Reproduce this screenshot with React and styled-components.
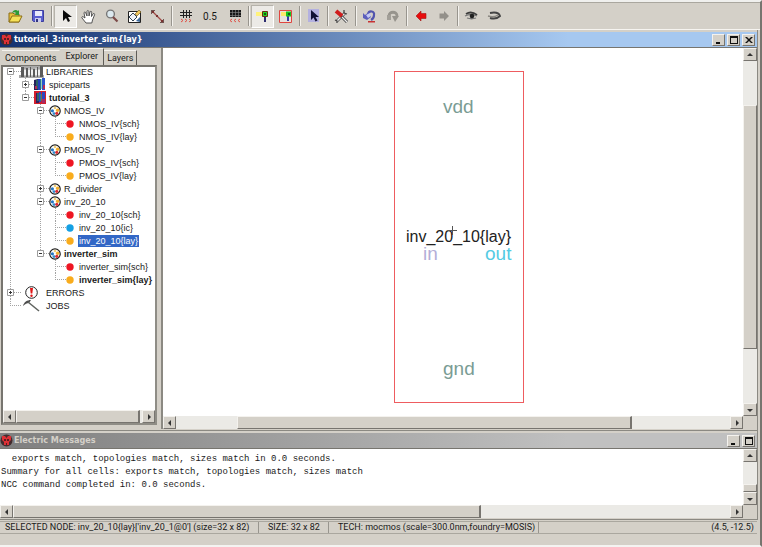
import React from "react";
import styled, {createGlobalStyle, css} from "styled-components";

const GlobalStyle = createGlobalStyle`
  * {
    box-sizing: border-box;
  }
  body {
    margin: 0;
    background: #d4d0c8;
    color: #1a1a1a;
    font-family: Roboto, "Liberation Sans", sans-serif;
    font-size: 9px;
  }
  button {
    font: inherit;
    color: inherit;
    padding: 0;
    margin: 0;
    border: 0;
    background: none;
  }
  svg {
    display: block;
    flex: none;
  }
`;

const raised = css`
  background: #d4d0c8;
  border: 1px solid;
  border-color: #f4f2ee #77746f #77746f #f4f2ee;
`;

const Frame = styled.div`
  min-height: 100vh;
  display: flex;
  flex-direction: column;
  border-top: 2px solid #f0f0ee;
  border-bottom: 2px solid #f4f3f1;
  border-right: 2px solid #77756f;
`;

/* toolbar */
const ToolBar = styled.div`
  display: flex;
  align-items: center;
  height: 28px;
  padding-left: 3px;
  border-top: 1px solid #aaa79f;
  border-bottom: 1px solid #f6f4f0;
`;

const ToolButton = styled.button`
  display: flex;
  align-items: center;
  justify-content: center;
  width: ${props => props.$wide ? "26px" : "23px"};
  height: 23px;
  font-size: 10px;
  ${props => props.$pressed && css`
    background: #eceae6;
    border: 1px solid;
    border-color: #b5b2aa #fff #fff #b5b2aa;
  `}
`;

const Separator = styled.div`
  width: 5px;
  height: 20px;
  border-left: 2px solid #d4d0c8;
  background: linear-gradient(90deg, #98958e 1px, #f4f2ee 1px, #f4f2ee 2px, #d4d0c8 2px);
`;

/* inner windows */
const Window = styled.section`
  display: flex;
  flex-direction: column;
  flex: ${props => props.$grow ? "1 0 auto" : "none"};
  margin-right: 2px;
  border-right: 1px solid #8b8982;
  border-bottom: 1px solid #8b8982;
  padding: 2px 0 1px;
`;

const TitleBar = styled.header`
  display: flex;
  align-items: center;
  height: 15px;
  padding-right: 2px;
  color: ${props => props.$active ? "#fff" : "#d4d0c8"};
  background: ${props => props.$active
    ? "linear-gradient(90deg, #12306f, #a6c8f0 75%)"
    : "linear-gradient(90deg, #7f7f7f, #c0c0c0 75%)"};
`;

const Title = styled.h1`
  flex: 1;
  margin: 0 0 0 1px;
  font-family: "DejaVu Sans Condensed", "DejaVu Sans", sans-serif;
  font-size: 9px;
  line-height: 15px;
  font-weight: bold;
`;

const WindowButtons = styled.div`
  display: flex;
  gap: 2px;
`;

const WindowButton = styled.button`
  ${raised}
  display: flex;
  align-items: center;
  justify-content: center;
  width: 13px;
  height: 12px;
`;

/* scroll bars */
const Scroll = styled.div`
  display: flex;
  flex: ${props => props.$fill ? "1" : "none"};
  flex-direction: ${props => props.$vertical ? "column" : "row"};
  ${props => props.$vertical ? "width: 14px;" : "height: 13px;"}
  background: #ebeae6;
`;

const ScrollButton = styled.button`
  ${raised}
  display: flex;
  align-items: center;
  justify-content: center;
  flex: none;
  width: ${props => props.$vertical ? "auto" : "13px"};
  height: 13px;
`;

const ScrollSpace = styled.div`
  flex: ${props => props.$size};
`;

const Thumb = styled.div`
  ${raised}
  border-right-width: ${props => props.$vertical ? "1px" : "2px"};
  flex: ${props => props.$size};
`;

const ScrollRow = styled.div`
  display: flex;
  background: #d4d0c8;
`;

const Corner = styled.div`
  width: 14px;
`;

/* explorer */
const Workspace = styled.div`
  display: flex;
  flex: 1;
  border-top: 1px solid #77756f;
`;

const SidePanel = styled.aside`
  display: flex;
  flex-direction: column;
  width: 163px;
  flex: none;
  padding-right: 4px;
  border-right: 2px solid #8b8982;
`;

const Tabs = styled.div`
  display: flex;
  align-items: flex-end;
  height: 17px;
  padding-left: 2px;
`;

const Tab = styled.button`
  height: ${props => props.$selected ? "17px" : "15px"};
  padding: ${props => props.$selected ? "0 5px 3px" : "0 3px"};
  border-top: 1px solid #f4f2ee;
  border-right: 1px solid ${props => props.$first ? "#d4d0c8" : "#5f5d58"};
`;

const TreeBox = styled.div`
  display: flex;
  flex-direction: column;
  flex: 1;
  margin: 0 0 4px 1px;
  border: 2px solid;
  border-color: #77756f #8f8d86 #8f8d86 #77756f;
  background: #fff;
`;

const TreeList = styled.ul`
  list-style: none;
  margin: ${props => props.$root ? "-2px 0 0 3px" : "0 0 0 15px"};
  padding: 0;
  font-family: "Liberation Sans", Arial, sans-serif;
  ${props => props.$root && "flex: 1;"}
`;

const TreeItem = styled.li`
  background: repeating-linear-gradient(#a3a3a3 0 1px, #fff 1px 2px) no-repeat 4px 0;
  background-size: 1px 100%;
  &:last-child {
    background-size: 1px 7px;
  }
  ul > &:first-child {
    background-position: 4px ${props => props.$top ? "7px" : "0"};
  }
`;

const TreeRow = styled.div`
  display: flex;
  align-items: center;
  height: 13px;
  white-space: nowrap;
  background: repeating-linear-gradient(90deg, #a3a3a3 0 1px, transparent 1px 2px) no-repeat 4px 6px;
  background-size: 11px 1px;
`;

const Expander = styled.button`
  width: 9px;
  height: 9px;
  margin-right: 3px;
  visibility: ${props => props.$leaf ? "hidden" : "visible"};
`;

const IconSlot = styled.span`
  display: flex;
  justify-content: center;
  width: ${props => props.$wide ? "26px" : "14px"};
`;

const Label = styled.span`
  line-height: 12px;
  padding: 0 1px;
  margin-left: 1px;
  font-weight: ${props => props.$bold ? "bold" : "normal"};
  ${props => props.$selected && css`
    background: #3267c6;
    color: #fff;
  `}
`;

/* layout editor */
const Editor = styled.div`
  display: flex;
  flex-direction: column;
  flex: 1;
`;

const EditorTop = styled.div`
  display: flex;
  flex: 1;
`;

const Canvas = styled.main`
  position: relative;
  flex: 1;
  min-height: 367px;
  background: #fff;
  font-family: "Liberation Sans", Arial, sans-serif;
`;

const Cell = styled.div`
  position: absolute;
  left: 231px;
  top: 23px;
  width: 130px;
  height: 332px;
  border: 1px solid #ee5c60;
`;

const Port = styled.span`
  position: absolute;
  left: ${props => props.$x}px;
  top: ${props => props.$y}px;
  font-size: ${props => props.$size || 19}px;
  line-height: 20px;
  color: ${props => props.$color};
`;

const Cross = styled.svg`
  position: absolute;
  left: 53px;
  top: 154px;
`;

/* messages */
const MessageBody = styled.div`
  display: flex;
  border-top: 1px solid #77756f;
`;

const Output = styled.pre`
  flex: 1;
  margin: 0;
  padding: 4px 1px;
  min-height: 56px;
  background: #fff;
  font-family: "Liberation Mono", "Courier New", monospace;
  font-size: 9px;
  line-height: 13px;
`;

const StatusBar = styled.footer`
  display: flex;
  height: 13px;
  margin: 1px 3px 11px 0;
  border-top: 1px solid #aaa79f;
  border-bottom: 1px solid #aaa79f;
  line-height: 11px;
  white-space: nowrap;
`;

const Status = styled.div`
  flex: ${props => props.$width ? `0 0 ${props.$width}px` : "1"};
  padding: 0 3px 0 ${props => props.$indent || 0}px;
  text-align: ${props => props.$width ? "left" : "right"};
  border-right: ${props => props.$width ? "1px solid #98958e" : "0"};
`;

/* icons */
const icons = {
  open: (
    <svg width="16" height="16" viewBox="0 0 16 16">
      <path d="M2 5h4l1 1h5v8H2z" fill="#e9c13d" stroke="#8b6e17" />
      <path d="M2 14l3-6h10l-3 6z" fill="#f5e158" stroke="#8b6e17" />
      <path d="M5 5c1-3 4-4 6-2l1-1v5H8l1-2c-1-1-2-1-4 0z" fill="#2f9b35" />
    </svg>
  ),
  save: (
    <svg width="14" height="14" viewBox="0 0 14 14">
      <path d="M1.500 1.500h11v11h-10l-1-1z" fill="#5a5ed0" stroke="#3d3f9c" />
      <path d="M4 2h7v5H4z" fill="#e8e9fb" />
      <path d="M4 9h6v4H4z" fill="#c9caee" />
      <path d="M5 10h2v3H5z" fill="#33357e" />
    </svg>
  ),
  arrow: (
    <svg width="12" height="14" viewBox="0 0 12 14">
      <path d="M3 1v11l3-3 2 4 2-1-2-4h4z" fill="#0a0a0a" />
    </svg>
  ),
  hand: (
    <svg width="15" height="15" viewBox="0 0 15 15">
      <path
        d="M5 14l-4-5c-.6-1 .5-2 1.500-1L4 9 3 4c0-1.200 1.400-1.300 1.700-.2L6 7V2.500c0-1.300 1.600-1.300 1.800 0L8 7l1-4c.3-1.200 1.800-.9 1.700.3L10.500 7.500 12 5c.6-1 2-.5 1.600.7L11.500 11l-.7 3z"
        fill="#fff" stroke="#444" strokeWidth=".9"
      />
    </svg>
  ),
  zoom: (
    <svg width="14" height="14" viewBox="0 0 14 14">
      <circle cx="5.500" cy="5" r="3.900" fill="#dce9ef" stroke="#777" strokeWidth="1.400" />
      <path d="M8 8l4.500 4.500" stroke="#7c4a48" strokeWidth="2.200" />
    </svg>
  ),
  outline: (
    <svg width="15" height="15" viewBox="0 0 15 15">
      <path d="M1.500 2.500h12v11h-12z" fill="#fff" stroke="#222" />
      <path d="M6 4l4 4-4 4-4-4z" fill="#eef2fa" stroke="#345" />
      <path d="M8 5l4-4 2 2-4 4z" fill="#eec55c" stroke="#665018" strokeWidth=".6" />
      <path d="M9 12l4-4v5z" fill="#3f6b9c" />
    </svg>
  ),
  measure: (
    <svg width="15" height="15" viewBox="0 0 15 15">
      <path d="M2 2l11 11" stroke="#a04a46" strokeWidth="1.200" />
      <path d="M1 1h4v1H2v3H1zM14 14h-4v-1h3v-3h1z" fill="#6e5551" />
      <path d="M2 2h2v2H2zM11 11h2v2h-2zM6 6h2v2H6z" fill="#7b3230" />
    </svg>
  ),
  gridUp: (
    <svg width="14" height="14" viewBox="0 0 14 14">
      <path d="M1 3.500h12M1 6.500h12M4.500 1v8M7.500 1v8M10.500 1v8" stroke="#222" />
      <path d="M2 10l2 1.500L2 13M6 10l2 1.500L6 13M10 10l2 1.500-2 1.500" fill="none" stroke="#e25046" />
    </svg>
  ),
  gridDown: (
    <svg width="14" height="14" viewBox="0 0 14 14">
      <path d="M2 1h11v7H2z" fill="#161616" />
      <path d="M2 3.500h11M2 6.500h11M4.500 1v7M7.500 1v7M10.500 1v7" stroke="#888" strokeWidth=".6" />
      <path d="M4 10l-2 1.500L4 13M8 10l-2 1.500L8 13M12 10l-2 1.500 2 1.500" fill="none" stroke="#e25046" />
    </svg>
  ),
  node: (
    <svg width="14" height="14" viewBox="0 0 14 14">
      <path d="M0 3h6v4H0z" fill="#fff27b" />
      <path d="M8 7h2v6H8z" fill="#2c2c6e" />
      <path d="M6.500 2.500h5v5h-5z" fill="#22d122" stroke="#6a2c12" />
      <path d="M8 4h2v2H8z" fill="#115c11" />
    </svg>
  ),
  area: (
    <svg width="15" height="15" viewBox="0 0 15 15">
      <path d="M1.500 1.500h12v12h-12z" fill="#e7e2dd" stroke="#e04540" />
      <path d="M3 3h5v4H3z" fill="#fbe96a" />
      <path d="M9 7h2v5H9z" fill="#3437a5" />
      <path d="M8 2.500h5v5H8z" fill="#17c31f" />
      <path d="M10 4h2v2h-2z" fill="#125d12" />
    </svg>
  ),
  special: (
    <svg width="16" height="16" viewBox="0 0 16 16">
      <path d="M2 1h11v13H2z" fill="#aaa7e8" opacity=".75" />
      <path d="M5 2v10l2.500-2.500 2 4 2-1-2-3.500h3.500z" fill="#111136" />
    </svg>
  ),
  tools: (
    <svg width="15" height="15" viewBox="0 0 15 15">
      <path d="M11 4l-8 8" stroke="#4a4a4a" strokeWidth="2.800" />
      <path d="M11 4l-8 8" stroke="#f0f0f0" strokeWidth="1.400" />
      <path d="M10 1v3l3 1M1 11l2 1v2" fill="none" stroke="#444" strokeWidth="1.300" />
      <path d="M7 7l6 6" stroke="#444" strokeWidth="3" />
      <path d="M8 8l5 5" stroke="#eee" strokeWidth="1.300" />
      <path d="M2 2l6 5" stroke="#cf1d1d" strokeWidth="4" />
    </svg>
  ),
  undo: (
    <svg width="15" height="15" viewBox="0 0 15 15">
      <path d="M6 5c1-4 7-3 6 1 0 2-1 4-3 5" fill="none" stroke="#5255ae" strokeWidth="2.200" />
      <path d="M1 4l2 2 4-3 2 5-4 3-4-2z" fill="#5b5ebc" />
      <path d="M4 6l4-2 1 3-3 2z" fill="#c4c9f5" />
      <path d="M6 12h7v1.500H6z" fill="#c83232" />
    </svg>
  ),
  redo: (
    <svg width="15" height="15" viewBox="0 0 15 15">
      <path d="M4 7c0-5 8-5 8 0" fill="none" stroke="#97948d" strokeWidth="2.800" />
      <path d="M7 7h7l-4 6z" fill="#97948d" />
      <path d="M2 6h4v5H2z" fill="#a29f98" />
    </svg>
  ),
  back: (
    <svg width="12" height="12" viewBox="0 0 12 12">
      <path d="M1 6l5-5v2.500h5v5H6V11z" fill="#e80d0d" stroke="#a31515" strokeWidth=".6" />
    </svg>
  ),
  forward: (
    <svg width="12" height="12" viewBox="0 0 12 12">
      <path d="M11 6L6 1v2.500H1.500v5H6V11z" fill="#93908a" />
    </svg>
  ),
  eyeOpen: (
    <svg width="15" height="10" viewBox="0 0 15 10">
      <path d="M2 3c3-2 7-2 11 1" fill="none" stroke="#3c3c3c" strokeWidth="1.800" />
      <path d="M1 5c4-2 8-2 12 0M3 7c3 1 6 1 9 0" fill="none" stroke="#777" strokeWidth="1.300" />
      <circle cx="8" cy="5" r="2.300" fill="#222" />
    </svg>
  ),
  eyeClosed: (
    <svg width="15" height="10" viewBox="0 0 15 10">
      <path d="M3 2c5-1 9 0 10 3-2 2-6 3-10 2" fill="none" stroke="#444" strokeWidth="1.900" />
      <path d="M1 5c3 1 7 1 10-1" fill="none" stroke="#8b8882" strokeWidth="1.500" />
    </svg>
  ),
  library: (
    <svg width="25" height="12" viewBox="0 0 25 12">
      <path d="M2 0h21v4H2zM0 9h25v3H0z" fill="#a9a9a9" />
      <path d="M2 1h3v10H2zM7 2h2v9H7zM11 1h1v10h-1zM14 3h2v8h-2zM18 1h1v10h-1zM21 0h3v11h-3z" fill="#5b5b5b" />
      <path d="M6 3v7M10 2v8M13 3v7M17 2v8M20 3v7" stroke="#e5e5e5" />
    </svg>
  ),
  books: (
    <svg width="12" height="13" viewBox="0 0 12 13">
      <path d="M0 2l4-1v11H0z" fill="#26215d" />
      <path d="M4 1h3v11H4z" fill="#2342bb" />
      <path d="M8 0h3v12H8z" fill="#2c55cb" />
      <path d="M3 2v9M7 1v10" stroke="#31a46e" />
      <path d="M1 8h2v3H1zM9 7h2v4H9z" fill="#b32d57" />
    </svg>
  ),
  currentBooks: (
    <svg width="12" height="13" viewBox="0 0 12 13">
      <path d="M0 0h12v13H0z" fill="#d3202d" />
      <path d="M2 2h3v10H2z" fill="#35205d" />
      <path d="M5 1h2v10H5zM8 1h3v10H8z" fill="#2a48c3" />
      <path d="M4 2v8M7 3v7" stroke="#2fa871" />
      <path d="M8 8h3v4H8z" fill="#a42c69" />
    </svg>
  ),
  cell: (
    <svg width="12" height="12" viewBox="0 0 12 12">
      <circle cx="6" cy="6" r="5.200" fill="#fff" stroke="#1c1c1c" strokeWidth="1.200" />
      <circle cx="6" cy="3" r="1.300" fill="#f0cf7a" />
      <circle cx="3.400" cy="5.800" r="1.600" fill="#2577c4" />
      <circle cx="8.600" cy="5.300" r="1.700" fill="#f1ad2a" />
      <circle cx="5" cy="8.600" r="1.400" fill="#2d89cc" />
      <circle cx="7.800" cy="8.300" r="1.600" fill="#dc2c35" />
    </svg>
  ),
  errors: (
    <svg width="13" height="13" viewBox="0 0 13 13">
      <circle cx="6.500" cy="6.500" r="5.800" fill="#fff" stroke="#222" />
      <path d="M5 2h3l-.7 5.500h-1.600z" fill="#e01717" />
      <circle cx="6.500" cy="9.700" r="1.200" fill="#e01717" />
    </svg>
  ),
  jobs: (
    <svg width="18" height="13" viewBox="0 0 18 13">
      <path d="M1 7c1-4 4-6 8-6L7 4C5 4 3 5 1 7z" fill="#4d4d4d" />
      <path d="M6 3l11 9" stroke="#5f635f" strokeWidth="1.500" />
    </svg>
  ),
  logo: (
    <svg width="13" height="13" viewBox="0 0 13 13">
      <circle cx="6.500" cy="6.500" r="6" fill="#442b2d" />
      <path d="M2 2h3l1.500 2L8 2h3v4l-2 2v3H4V8L2 6z" fill="#dc3035" />
      <path d="M4 5h2v2H4zM7 5h2v2H7zM6 9h1v2H6z" fill="#5b1d20" />
    </svg>
  ),
};

const dotColors = {sch: "#ee1522", lay: "#f9ac1c", ic: "#14a0e4"};

const Dot = ({view}) => (
  <svg width="8" height="8" viewBox="0 0 8 8">
    <circle cx="4" cy="4" r="3.700" fill={dotColors[view]} />
  </svg>
);

const arrows = {
  up: "M0 4l3-3 3 3z",
  down: "M0 2l3 3 3-3z",
  left: "M4 0L1 3l3 3z",
  right: "M2 0l3 3-3 3z",
};

const Arrow = ({to}) => (
  <svg width="6" height="6" viewBox="0 0 6 6">
    <path d={arrows[to]} fill="#333" />
  </svg>
);

const ScrollBar = ({vertical, fill, label, before, size, after}) => (
  <Scroll $vertical={vertical} $fill={fill}>
    <ScrollButton $vertical={vertical} aria-label={`${label} back`}>
      <Arrow to={vertical ? "up" : "left"} />
    </ScrollButton>
    <ScrollSpace $size={before} />
    <Thumb $vertical={vertical} $size={size} />
    <ScrollSpace $size={after} />
    <ScrollButton $vertical={vertical} aria-label={`${label} forward`}>
      <Arrow to={vertical ? "down" : "right"} />
    </ScrollButton>
  </Scroll>
);

const tools = [
  {icon: "open", name: "Open library"},
  {icon: "save", name: "Save library"},
  null,
  {icon: "arrow", name: "Select", pressed: true},
  {icon: "hand", name: "Pan"},
  {icon: "zoom", name: "Zoom"},
  {icon: "outline", name: "Outline edit"},
  {icon: "measure", name: "Measure"},
  null,
  {icon: "gridUp", name: "Larger grid"},
  {text: "0.5"},
  {icon: "gridDown", name: "Smaller grid"},
  null,
  {icon: "node", name: "Select objects", pressed: true},
  {icon: "area", name: "Select area"},
  null,
  {icon: "special", name: "Special select"},
  null,
  {icon: "tools", name: "Preferences"},
  null,
  {icon: "undo", name: "Undo"},
  {icon: "redo", name: "Redo"},
  null,
  {icon: "back", name: "Go back"},
  {icon: "forward", name: "Go forward"},
  null,
  {icon: "eyeOpen", name: "Expand"},
  {icon: "eyeClosed", name: "Unexpand"},
];

const libraries = [
  {
    name: "LIBRARIES", icon: "library", wide: true, open: true,
    children: [
      {name: "spiceparts", icon: "books", children: []},
      {
        name: "tutorial_3", icon: "currentBooks", bold: true, open: true,
        children: [
          {
            name: "NMOS_IV", icon: "cell", open: true,
            children: [
              {name: "NMOS_IV{sch}", view: "sch"},
              {name: "NMOS_IV{lay}", view: "lay"},
            ],
          },
          {
            name: "PMOS_IV", icon: "cell", open: true,
            children: [
              {name: "PMOS_IV{sch}", view: "sch"},
              {name: "PMOS_IV{lay}", view: "lay"},
            ],
          },
          {name: "R_divider", icon: "cell", children: []},
          {
            name: "inv_20_10", icon: "cell", open: true,
            children: [
              {name: "inv_20_10{sch}", view: "sch"},
              {name: "inv_20_10{ic}", view: "ic"},
              {name: "inv_20_10{lay}", view: "lay", selected: true},
            ],
          },
          {
            name: "inverter_sim", icon: "cell", bold: true, open: true,
            children: [
              {name: "inverter_sim{sch}", view: "sch"},
              {name: "inverter_sim{lay}", view: "lay", bold: true},
            ],
          },
        ],
      },
    ],
  },
  {name: "ERRORS", icon: "errors", wide: true, children: []},
  {name: "JOBS", icon: "jobs", wide: true},
];

const TreeNode = ({node, top}) => (
  <TreeItem $top={top}>
    <TreeRow>
      <Expander $leaf={!node.children} aria-label={`Toggle ${node.name}`}>
        <svg width="9" height="9" viewBox="0 0 9 9">
          <path d="M1.500 1.500h6v6h-6z" fill="#fff" stroke="#9c9c9c" />
          <path d={node.open ? "M3 4.500h3" : "M3 4.500h3M4.500 3v3"} stroke="#333" />
        </svg>
      </Expander>
      <IconSlot $wide={node.wide}>
        {node.view ? <Dot view={node.view} /> : icons[node.icon]}
      </IconSlot>
      <Label $bold={node.bold} $selected={node.selected}>{node.name}</Label>
    </TreeRow>
    {node.open && (
      <TreeList>
        {node.children.map(child => <TreeNode key={child.name} node={child} />)}
      </TreeList>
    )}
  </TreeItem>
);

const output = `  exports match, topologies match, sizes match in 0.0 seconds.
Summary for all cells: exports match, topologies match, sizes match
NCC command completed in: 0.0 seconds.`;

const windowIcons = {
  Minimize: "M1 6h4v2H1z",
  Maximize: "M0 0h8v8H0zM1 2v5h6V2z",
  Close: "M0 1h2l2 2 2-2h2L5 4l3 3H6L4 5 2 7H0l3-3z",
};

const TitleButtons = ({names}) => (
  <WindowButtons>
    {names.map(name => (
      <WindowButton key={name} aria-label={name}>
        <svg width="8" height="8" viewBox="0 0 8 8">
          <path d={windowIcons[name]} fill="#111" fillRule="evenodd" />
        </svg>
      </WindowButton>
    ))}
  </WindowButtons>
);

function App() {
  return (
    <Frame>
      <GlobalStyle />
      <ToolBar>
        {tools.map((tool, i) => tool
          ? (
            <ToolButton key={i} aria-label={tool.name} $pressed={tool.pressed} $wide={tool.text}>
              {tool.text || icons[tool.icon]}
            </ToolButton>
          )
          : <Separator key={i} />)}
      </ToolBar>

      <Window $grow>
        <TitleBar $active>
          {icons.logo}
          <Title>{"tutorial_3:inverter_sim{lay}"}</Title>
          <TitleButtons names={["Minimize", "Maximize", "Close"]} />
        </TitleBar>
        <Workspace>
          <SidePanel>
            <Tabs>
              <Tab $first>Components</Tab>
              <Tab $selected>Explorer</Tab>
              <Tab>Layers</Tab>
            </Tabs>
            <TreeBox>
              <TreeList $root>
                {libraries.map(node => <TreeNode key={node.name} node={node} top />)}
              </TreeList>
              <ScrollBar label="Explorer" before={0} size={123} after={2} />
            </TreeBox>
          </SidePanel>
          <Editor>
            <EditorTop>
              <Canvas>
                {/* placed cell instance with its exports */}
                <Cell>
                  <Port $x={48} $y={25} $color="#7a9c94">vdd</Port>
                  <Port $x={11} $y={155} $size={16} $color="#222">{"inv_20_10{lay}"}</Port>
                  <Port $x={28} $y={172} $color="#b3aed8">in</Port>
                  <Port $x={90} $y={172} $color="#55cbe3">out</Port>
                  <Port $x={48} $y={287} $color="#7a9c94">gnd</Port>
                  <Cross width="9" height="9" viewBox="0 0 9 9">
                    <path d="M0 4.500h9M4.500 0v9" stroke="#555" />
                  </Cross>
                </Cell>
              </Canvas>
              <ScrollBar vertical label="Vertical" before={44} size={243} after={54} />
            </EditorTop>
            <ScrollRow>
              <ScrollBar fill label="Horizontal" before={62} size={395} after={99} />
              <Corner />
            </ScrollRow>
          </Editor>
        </Workspace>
      </Window>

      <Window>
        <TitleBar>
          {icons.logo}
          <Title>Electric Messages</Title>
          <TitleButtons names={["Minimize", "Maximize"]} />
        </TitleBar>
        <MessageBody>
          <Output>{output}</Output>
          <ScrollBar vertical label="Messages" before={23} size={6} after={0} />
        </MessageBody>
        <ScrollRow>
          <ScrollBar fill label="Messages line" before={0} size={467} after={250} />
          <Corner />
        </ScrollRow>
      </Window>

      <StatusBar>
        <Status $width={259} $indent={5}>{"SELECTED NODE: inv_20_10{lay}['inv_20_1@0'] (size=32 x 82)"}</Status>
        <Status $width={70} $indent={9}>SIZE: 32 x 82</Status>
        <Status $width={209} $indent={9}>TECH: mocmos (scale=300.0nm,foundry=MOSIS)</Status>
        <Status>(4.5, -12.5)</Status>
      </StatusBar>
    </Frame>
  );
}

export default App;
